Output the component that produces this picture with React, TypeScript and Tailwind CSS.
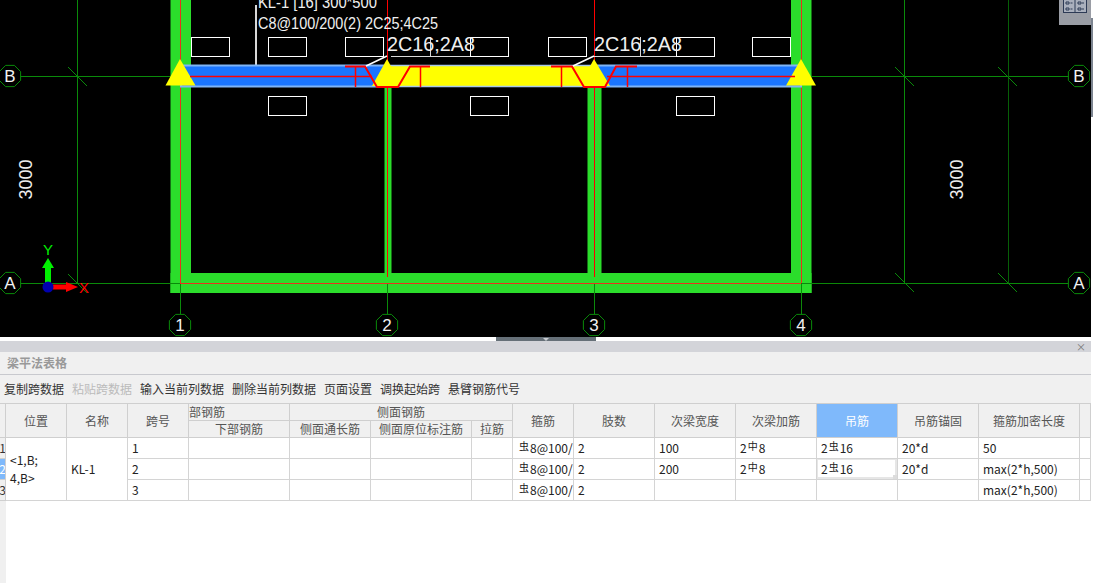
import React from 'react';

const cjk = "font-['Microsoft_YaHei','Noto_Sans_CJK_SC',sans-serif]";

const bubbles = [
	{ x: 10, y: 76, label: 'B' },
	{ x: 1079, y: 76, label: 'B' },
	{ x: 10, y: 283, label: 'A' },
	{ x: 1079, y: 283, label: 'A' },
	{ x: 180, y: 325, label: '1' },
	{ x: 387, y: 325, label: '2' },
	{ x: 594, y: 325, label: '3' },
	{ x: 801, y: 325, label: '4' },
];

const topBoxes = [
	[191, 37], [268, 37], [345, 37], [470, 37], [548, 37], [676, 37], [752, 37],
	[268, 96], [470, 96], [676, 96],
];

const octagon = (cx: number, cy: number, r: number) => {
	const pts = [];
	for (let i = 0; i < 8; i++) {
		const a = (Math.PI / 4) * i + Math.PI / 8;
		pts.push(`${cx + r * Math.cos(a)},${cy + r * Math.sin(a)}`);
	}
	return pts.join(' ');
};

const Drawing = () => (
	<svg width="1091" height="337" viewBox="0 0 1091 337" className="block">
		<rect width="1091" height="337" fill="#000" />

		{/* walls */}
		<g fill="#2bdd2b">
			<rect x="170.5" y="0" width="20.5" height="293" />
			<rect x="791" y="0" width="20.5" height="293" />
			<rect x="170.5" y="273" width="641" height="20" />
			<rect x="384.5" y="87" width="7" height="190" />
			<rect x="587.5" y="87" width="14" height="190" />
		</g>

		{/* axis lines */}
		<g stroke="#0a8a0a" strokeWidth="1" fill="none" shapeRendering="crispEdges">
			<line x1="0" y1="76.5" x2="1070" y2="76.5" />
			<line x1="0" y1="283.5" x2="1070" y2="283.5" />
			<line x1="77.5" y1="0" x2="77.5" y2="283" />
			<line x1="904.5" y1="0" x2="904.5" y2="283" />
			<line x1="1008.5" y1="0" x2="1008.5" y2="283" stroke="#075f07" />
			<line x1="180.5" y1="283" x2="180.5" y2="315" />
			<line x1="387.5" y1="283" x2="387.5" y2="315" />
			<line x1="594.5" y1="283" x2="594.5" y2="315" />
			<line x1="801.5" y1="283" x2="801.5" y2="315" />
		</g>
		<g stroke="#0a8a0a" strokeWidth="1">
			<line x1="68" y1="67" x2="87" y2="86" />
			<line x1="895" y1="67" x2="914" y2="86" />
			<line x1="998" y1="67" x2="1017" y2="86" />
			<line x1="68" y1="274" x2="87" y2="293" />
			<line x1="895" y1="273" x2="914" y2="292" />
			<line x1="998" y1="273" x2="1017" y2="292" />
		</g>

		{/* red centre lines */}
		<g stroke="#e8321e" strokeWidth="1" shapeRendering="crispEdges">
			<line x1="180.5" y1="0" x2="180.5" y2="283" />
			<line x1="801.5" y1="0" x2="801.5" y2="283" />
			<line x1="180" y1="273.5" x2="801" y2="283.5" stroke="none" />
			<line x1="180" y1="283.5" x2="801" y2="283.5" />
		</g>
		<g stroke="#ff0000" strokeWidth="1" shapeRendering="crispEdges">
			<line x1="387.5" y1="0" x2="387.5" y2="277" />
			<line x1="594.5" y1="0" x2="594.5" y2="277" />
		</g>

		{/* bubbles */}
		{bubbles.map((b) => (
			<g key={`${b.label}${b.x}`}>
				<polygon points={octagon(b.x, b.y, 11.5)} fill="#000" stroke="#0a8a0a" strokeWidth="1" />
				<text x={b.x} y={b.y + 6} textAnchor="middle" fontSize="17" fill="#f2f2f2" fontFamily="'Liberation Sans', sans-serif">
					{b.label}
				</text>
			</g>
		))}

		{/* rebar label boxes */}
		<g fill="none" stroke="#ffffff" strokeWidth="1" shapeRendering="crispEdges">
			{topBoxes.map(([x, y]) => (
				<rect key={`${x}-${y}`} x={x + 0.5} y={y + 0.5} width="38" height="19" />
			))}
		</g>
		<g stroke="#d8d8d8" strokeWidth="1" shapeRendering="crispEdges">
			<line x1="391" y1="56.5" x2="470" y2="56.5" />
			<line x1="430.5" y1="37" x2="430.5" y2="56" />
			<line x1="594" y1="56.5" x2="676" y2="56.5" />
			<line x1="640.5" y1="37" x2="640.5" y2="56" />
			<line x1="255.5" y1="5" x2="255.5" y2="65" strokeWidth="2" />
		</g>

		{/* beam */}
		<rect x="181" y="65.5" width="206" height="21" fill="#1a75ff" stroke="#7fb4f5" strokeWidth="2" />
		<rect x="387" y="65.5" width="207" height="21" fill="#ffff00" stroke="#a8c8e8" strokeWidth="1.5" />
		<rect x="594" y="65.5" width="207" height="21" fill="#1a75ff" stroke="#7fb4f5" strokeWidth="2" />
		<polygon points="180,59 165.5,85.5 195.5,85.5" fill="#ffff00" />
		<polygon points="387,59 372,86 402,86" fill="#ffff00" />
		<polygon points="594,59 579,86 610,86" fill="#ffff00" />
		<polygon points="801,59 786,85.5 816,85.5" fill="#ffff00" />

		{/* beam rebar */}
		<g stroke="#ff0000" fill="none">
			<line x1="190" y1="76.5" x2="372" y2="76.5" strokeWidth="1.5" />
			<line x1="607" y1="76.5" x2="795" y2="76.5" strokeWidth="1.5" />
			<path d="M345 66.5H365L377 87H398L410 66.5H430" strokeWidth="2" />
			<path d="M355.5 66.5V87M420.5 66.5V87" strokeWidth="1.5" />
			<path d="M551 66.5H572L584 87H605L616 66.5H637" strokeWidth="2" />
			<path d="M561.5 66.5V87M627.5 66.5V87" strokeWidth="1.5" />
		</g>

		{/* leaders */}
		<g stroke="#ffffff" strokeWidth="1.5">
			<line x1="366" y1="66" x2="387" y2="56" />
			<line x1="573" y1="66" x2="594" y2="56" />
		</g>

		{/* annotation text */}
		<g fill="#f0f0f0" fontFamily="'Liberation Sans', sans-serif">
			<text x="258" y="8" fontSize="16" textLength="119" lengthAdjust="spacingAndGlyphs">KL-1 [16] 300*500</text>
			<text x="258" y="29" fontSize="16" textLength="180" lengthAdjust="spacingAndGlyphs">C8@100/200(2) 2C25;4C25</text>
			<text x="387" y="51" fontSize="21" textLength="88" lengthAdjust="spacingAndGlyphs">2C16;2A8</text>
			<text x="594" y="51" fontSize="21" textLength="88" lengthAdjust="spacingAndGlyphs">2C16;2A8</text>
			<text transform="translate(32 199.5) rotate(-90)" fontSize="18" textLength="40" lengthAdjust="spacingAndGlyphs">3000</text>
			<text transform="translate(963 199.5) rotate(-90)" fontSize="18" textLength="40" lengthAdjust="spacingAndGlyphs">3000</text>
		</g>

		{/* ucs icon */}
		<rect x="45" y="267" width="6" height="16" fill="#00f000" />
		<polygon points="48,258 42,268 54,268" fill="#00f000" />
		<rect x="53" y="284.5" width="14" height="5" fill="#ff0000" />
		<polygon points="78,287 66,282 66,292" fill="#ff0000" />
		<circle cx="48" cy="287" r="5.5" fill="#0000b0" />
		<text x="48" y="255" textAnchor="middle" fontSize="15" fill="#00f000" fontFamily="'Liberation Sans', sans-serif">Y</text>
		<text x="84" y="293" textAnchor="middle" fontSize="15" fill="#ff0000" fontFamily="'Liberation Sans', sans-serif">X</text>
	</svg>
);

const Toolbox = () => (
	<div className="absolute top-0 right-0 w-[32px] h-[25px] bg-[#9a9da5] flex justify-center">
		<svg width="24" height="13" viewBox="0 0 24 13" fill="none" stroke="#2d3a55">
			<rect x="0.5" y="-4.5" width="23" height="17" fill="#aab0bd" />
			<line x1="12" y1="-4" x2="12" y2="13" />
			<path d="M3 2h3v2H3zM3 8h3v2H3zM15 2h3v2h-3zM15 8h3v2h-3zM7.5 9h2M19 9h2M7.5 3h2M19 3h2" />
		</svg>
	</div>
);

const head = "bg-[#f0f0f0] border-r border-b border-[#cfcfcf] flex items-center justify-center text-[#555] overflow-hidden";
const cell = "bg-white border-r border-b border-[#d4d4d4] flex items-center pl-1 text-[#222] whitespace-nowrap overflow-hidden";

const Steel = ({ hat }: { hat?: boolean }) => (
	<span className="text-[10px] leading-none relative -top-[2px] mx-px">{hat ? '虫' : '中'}</span>
);

const rows = [
	{ n: '1', width: '100', add: true, hang: true, anchor: '20*d', len: '50' },
	{ n: '2', width: '200', add: true, hang: true, anchor: '20*d', len: 'max(2*h,500)', sel: true },
	{ n: '3', width: '', add: false, hang: false, anchor: '', len: 'max(2*h,500)' },
];

const App = () => {
	return (
		<div className={`w-[1093px] h-[583px] bg-white overflow-hidden text-xs ${cjk}`}>
			<div className="w-[1091px] relative">
				<Drawing />
				<Toolbox />
			</div>
			<div className="absolute top-[18px] left-[1091px] w-[2px] h-[99px] bg-[#7c8490]" />

			<div className="w-[1091px] h-[4px] flex justify-center bg-white">
				<div className="w-[100px] h-[4px] bg-[#667078] flex justify-center">
					<div className="w-0 h-0 border-l-[3px] border-r-[3px] border-t-[3px] border-l-transparent border-r-transparent border-t-[#c8ccd0] mt-px" />
				</div>
			</div>

			<div className="w-[1091px]">
				<div className="h-[11px] bg-[#d3d4d9] flex justify-end items-center pr-[5px] text-[#777] text-[10px] leading-none">×</div>
				<div className="h-[23px] bg-[#f0f0f0] border-b border-[#c8c9ce] flex items-center pl-[7px] font-bold text-[#999]">梁平法表格</div>
				<div className="h-[28px] bg-[#f0f0f0] flex items-center gap-2 pl-1 text-[#333]">
					<span>复制跨数据</span>
					<span className="text-[#bbb]">粘贴跨数据</span>
					<span>输入当前列数据</span>
					<span>删除当前列数据</span>
					<span>页面设置</span>
					<span>调换起始跨</span>
					<span>悬臂钢筋代号</span>
				</div>

				<div className="grid grid-cols-[6px_61px_61px_61px_101px_81px_101px_41px_61px_81px_81px_81px_81px_81px_101px_11px] grid-rows-[17px_17px_21px_21px_21px] border-t border-[#cfcfcf]">
					<div className={`${head} row-span-2`} />
					<div className={`${head} row-span-2`}>位置</div>
					<div className={`${head} row-span-2`}>名称</div>
					<div className={`${head} row-span-2`}>跨号</div>
					<div className={`${head} justify-start!`}>部钢筋</div>
					<div className={`${head} col-span-3`}>侧面钢筋</div>
					<div className={`${head} row-span-2`}>箍筋</div>
					<div className={`${head} row-span-2`}>肢数</div>
					<div className={`${head} row-span-2`}>次梁宽度</div>
					<div className={`${head} row-span-2`}>次梁加筋</div>
					<div className={`${head} row-span-2 bg-[#7fb9fb]! text-white!`}>吊筋</div>
					<div className={`${head} row-span-2`}>吊筋锚固</div>
					<div className={`${head} row-span-2`}>箍筋加密长度</div>
					<div className={`${head} row-span-2`} />
					<div className={head}>下部钢筋</div>
					<div className={head}>侧面通长筋</div>
					<div className={head}>侧面原位标注筋</div>
					<div className={head}>拉筋</div>

					{rows.map((r, i) => (
						<React.Fragment key={r.n}>
							<div className={`${r.sel ? 'bg-[#7fb9fb] text-white' : 'bg-[#f0f0f0] text-[#333]'} border-r border-b border-[#cfcfcf] flex items-center justify-center overflow-hidden`}>{r.n}</div>
							{i === 0 && (
								<>
									<div className={`${cell} row-span-3 whitespace-normal! pr-1 leading-[18px]`}>{'<1,B;'}<br />{'4,B>'}</div>
									<div className={`${cell} row-span-3`}>KL-1</div>
								</>
							)}
							<div className={cell}>{r.n}</div>
							<div className={cell} />
							<div className={cell} />
							<div className={cell} />
							<div className={cell} />
							<div className={`${cell} pl-[5px]`}><Steel hat />8@100/</div>
							<div className={cell}>2</div>
							<div className={cell}>{r.width}</div>
							<div className={cell}>{r.add && <>2<Steel />8</>}</div>
							<div className={`${cell} relative`}>
								{r.hang && <>2<Steel hat />16</>}
								{r.sel && (
									<div className="absolute inset-0 border-2 border-[#e6e6e6] border-l-[1px] border-t-[1px]">
										<div className="absolute -right-[2px] -bottom-[2px] w-[4px] h-[4px] bg-[#dcdcdc]" />
									</div>
								)}
							</div>
							<div className={cell}>{r.anchor}</div>
							<div className={cell}>{r.len}</div>
							<div className={cell} />
						</React.Fragment>
					))}
				</div>
				<div className="w-[6px] h-[82px] bg-[#f0f0f0]" />
			</div>
		</div>
	);
};

export default App;
